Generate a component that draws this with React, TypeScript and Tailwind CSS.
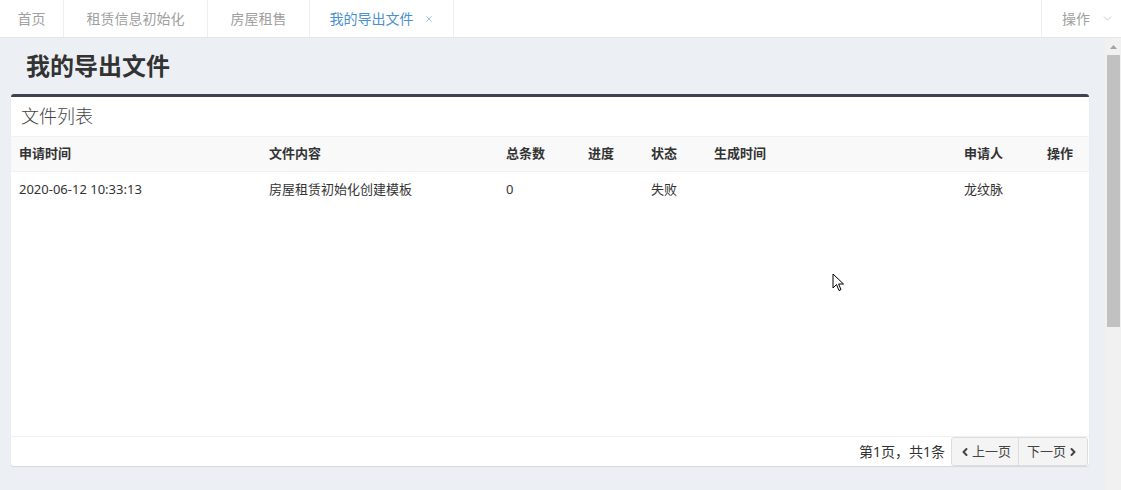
import { ChevronDown, ChevronLeft, ChevronRight, X } from 'lucide-react';

const FONT = { fontFamily: '"Noto Sans", "Noto Sans CJK SC", sans-serif' };

const tabs = [
  { label: '首页', width: 'w-[64px]' },
  { label: '租赁信息初始化', width: 'w-[144px]' },
  { label: '房屋租售', width: 'w-[102px]' },
];

const columns = [
  { title: '申请时间', width: 'w-[250px]' },
  { title: '文件内容', width: 'w-[237px]' },
  { title: '总条数', width: 'w-[82px]' },
  { title: '进度', width: 'w-[63px]' },
  { title: '状态', width: 'w-[63px]' },
  { title: '生成时间', width: 'w-[250px]' },
  { title: '申请人', width: 'w-[83px]' },
  { title: '操作', width: '' },
];

const rows = [
  ['2020-06-12 10:33:13', '房屋租赁初始化创建模板', '0', '', '失败', '', '龙纹脉', ''],
];

export default function App() {
  return (
    <div className="relative h-[490px] w-[1121px] overflow-hidden bg-[#ecf0f5] text-[#333]" style={FONT}>
      {/* tab bar */}
      <div className="flex h-[38px] border-b border-[#e4e7ea] bg-white text-[14px]">
        {tabs.map((t) => (
          <div
            key={t.label}
            className={`${t.width} flex items-center justify-center border-r border-[#eceff2] text-[#a0a0a0]`}
          >
            {t.label}
          </div>
        ))}
        <div className="flex w-[144px] items-center justify-center gap-[10px] border-r border-[#eceff2] text-[#4a8fd0]">
          我的导出文件
          <X className="h-[10px] w-[10px] text-[#8fb5d6]" strokeWidth={2} />
        </div>
        <div className="flex-1" />
        <div className="flex w-[80px] items-center gap-[11px] border-l border-[#eceff2] pl-[20px] text-[#a0a0a0]">
          操作
          <ChevronDown className="h-[13px] w-[13px] text-[#bbb]" strokeWidth={1.5} />
        </div>
      </div>

      <div className="flex h-[452px]">
        <div className="flex-1 pl-[11px] pr-[16px]">
          <div className="flex h-[56px] items-center pl-[15px] text-[24px] font-bold text-[#333]">
            我的导出文件
          </div>

          <div className="flex h-[372px] flex-col rounded-[3px] border-t-[3px] border-[#3d4450] bg-white shadow-[0_1px_1px_rgba(0,0,0,0.1)]">
            <div className="flex h-[39px] items-center pl-[10px] text-[18px] font-light text-[#444]">
              文件列表
            </div>

            <table className="w-full table-fixed border-collapse text-[13px]">
              <thead>
                <tr className="h-[35px] border-y border-[#f1f1f1] bg-[#f9f9f9]">
                  {columns.map((c) => (
                    <th key={c.title} className={`${c.width} px-[8px] text-left font-bold text-[#333]`}>
                      {c.title}
                    </th>
                  ))}
                </tr>
              </thead>
              <tbody>
                {rows.map((r, i) => (
                  <tr key={i} className="h-[35px]">
                    {r.map((cell, j) => (
                      <td key={j} className="px-[8px] text-[#333]">
                        {cell}
                      </td>
                    ))}
                  </tr>
                ))}
              </tbody>
            </table>

            <div className="flex-1" />

            <div className="flex h-[30px] items-stretch justify-end border-t border-[#f0f0f0] pr-[1px] text-[13px]">
              <div className="flex items-center pr-[6px] text-[14px] text-[#333]">第1页，共1条</div>
              <div className="flex">
                <button className="flex w-[68px] items-center justify-center gap-[1px] rounded-l-[3px] border border-[#ddd] bg-[#f4f4f4] text-[#444]">
                  <ChevronLeft className="h-[12px] w-[12px]" strokeWidth={4} />
                  上一页
                </button>
                <button className="-ml-px flex w-[70px] items-center justify-center gap-[1px] rounded-r-[3px] border border-[#ddd] bg-[#f4f4f4] text-[#444]">
                  下一页
                  <ChevronRight className="h-[12px] w-[12px]" strokeWidth={4} />
                </button>
              </div>
            </div>
          </div>
        </div>

        {/* scrollbar */}
        <div className="flex w-[16px] flex-col items-center bg-[#f1f1f1]">
          <div className="flex h-[17px] w-full items-center justify-center">
            <svg width="7" height="4" viewBox="0 0 7 4">
              <path d="M0 4 L3.5 0 L7 4 Z" fill="#a3a3a3" />
            </svg>
          </div>
          <div className="h-[272px] w-[13px] bg-[#c1c1c1]" />
        </div>
      </div>

      {/* mouse cursor */}
      <svg className="absolute left-[832px] top-[273px]" width="13" height="20" viewBox="0 0 13 20">
        <path d="M1 1 L1 15 L4.5 11.5 L7 17.5 L9 16.6 L6.6 11 L11.5 11 Z" fill="white" stroke="black" strokeWidth="1" strokeLinejoin="round" />
      </svg>
    </div>
  );
}
